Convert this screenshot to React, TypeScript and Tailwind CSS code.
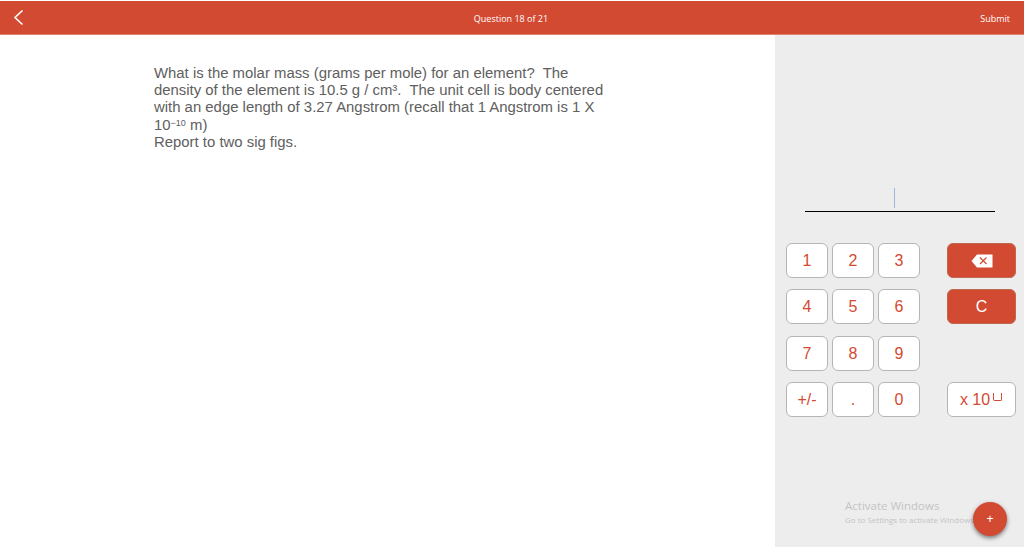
const keyRows = [
  ["1", "2", "3"],
  ["4", "5", "6"],
  ["7", "8", "9"],
  ["+/-", ".", "0"],
];

function Key({ label }: { label: string }) {
  return (
    <button className="flex h-[35px] w-[42px] items-center justify-center rounded-[6px] border border-[#b5b5b5] bg-white pt-px text-[16px] text-[#d34a32]">
      {label}
    </button>
  );
}

export default function App() {
  return (
    <div className="flex h-[547px] w-[1024px] flex-col overflow-hidden bg-white pt-px font-['Liberation_Sans',sans-serif]">
      {/* Top bar */}
      <header className="grid h-[34px] shrink-0 grid-cols-[1fr_auto_1fr] items-center border-b border-[#e0806e] bg-[#d34a32] pl-[12px] pr-[14px] text-white">
        <svg width="14" height="18" viewBox="0 0 14 18" fill="none" stroke="currentColor" strokeWidth="1.6">
          <path d="M10.5 1.5 3 8.5l7.5 7" />
        </svg>
        <span className="pt-[2px] font-['Open_Sans',sans-serif] text-[9px]">Question 18 of 21</span>
        <span className="justify-self-end pt-[2px] font-['Open_Sans',sans-serif] text-[9px]">Submit</span>
      </header>

      <div className="flex min-h-0 flex-1">
        {/* Question */}
        <main className="min-w-0 flex-1 pl-[154px] pt-[30px]">
          <p className="w-[455px] text-[14.9px] leading-[17.2px] text-[#606060]">
            What is the molar mass (grams per mole) for an element?&nbsp; The density of the element is 10.5 g / cm³.&nbsp; The unit cell is body centered with an edge length of 3.27 Angstrom (recall that 1 Angstrom is 1 X 10<span className="relative -top-[4px] inline-block text-[9px] leading-none">−10</span> m)
            <br />
            Report to two sig figs.
          </p>
        </main>

        {/* Answer pad */}
        <aside className="relative w-[249px] shrink-0 bg-[#ededed] pl-[11px]">
          <div className="ml-[19px] mt-[153px] flex h-[24px] w-[190px] border-b border-black pl-[89px]">
            <span className="h-[20px] w-px bg-[#9db8d6]" />
          </div>
          <div className="mt-[31px] flex gap-[27px]">
            <div className="flex flex-col gap-[11.33px]">
              {keyRows.map((row) => (
                <div key={row.join("")} className="flex gap-[4px]">
                  {row.map((label) => (
                    <Key key={label} label={label} />
                  ))}
                </div>
              ))}
            </div>
            <div className="flex w-[69px] flex-col gap-[11.33px]">
              <button className="flex h-[35px] items-center justify-center rounded-[6px] border border-[#c0674f] bg-[#d34a32]">
                <svg width="22" height="14" viewBox="0 0 22 14">
                  <path d="M6 0.5h15.500v13H6L0.500 7z" fill="#fff" />
                  <path d="M9 3.500l6.500 6.500M15.500 3.500 9 10" stroke="#d34a32" strokeWidth="1.200" fill="none" />
                </svg>
              </button>
              <button className="flex h-[35px] items-center justify-center rounded-[6px] border border-[#c0674f] bg-[#d34a32] pt-px text-[16px] text-white">
                C
              </button>
              <div className="h-[35px]" />
              <button className="flex h-[35px] items-center justify-center gap-[3px] rounded-[6px] border border-[#b5b5b5] bg-white pr-[1px] pt-[2px] text-[16px] text-[#d34a32]">
                x 10
                <span className="mb-[6px] h-[8px] w-[9px] rounded-b-[2px] border-x border-b border-[#d34a32]" />
              </button>
            </div>
          </div>

          {/* Windows watermark */}
          <div className="absolute left-[70px] top-[463px] whitespace-nowrap font-['Open_Sans',sans-serif] text-[#c4c4c4]">
            <div className="text-[11.500px] leading-[15px]">Activate Windows</div>
            <div className="text-[8px] leading-[14px]">Go to Settings to activate Windows.</div>
          </div>

          <button className="absolute left-[198px] top-[467px] flex h-[34px] w-[34px] items-center justify-center rounded-full bg-[#d34a32] text-[12px] text-white shadow-[0_2px_4px_rgba(0,0,0,0.5)]">
            +
          </button>
        </aside>
      </div>
    </div>
  );
}
